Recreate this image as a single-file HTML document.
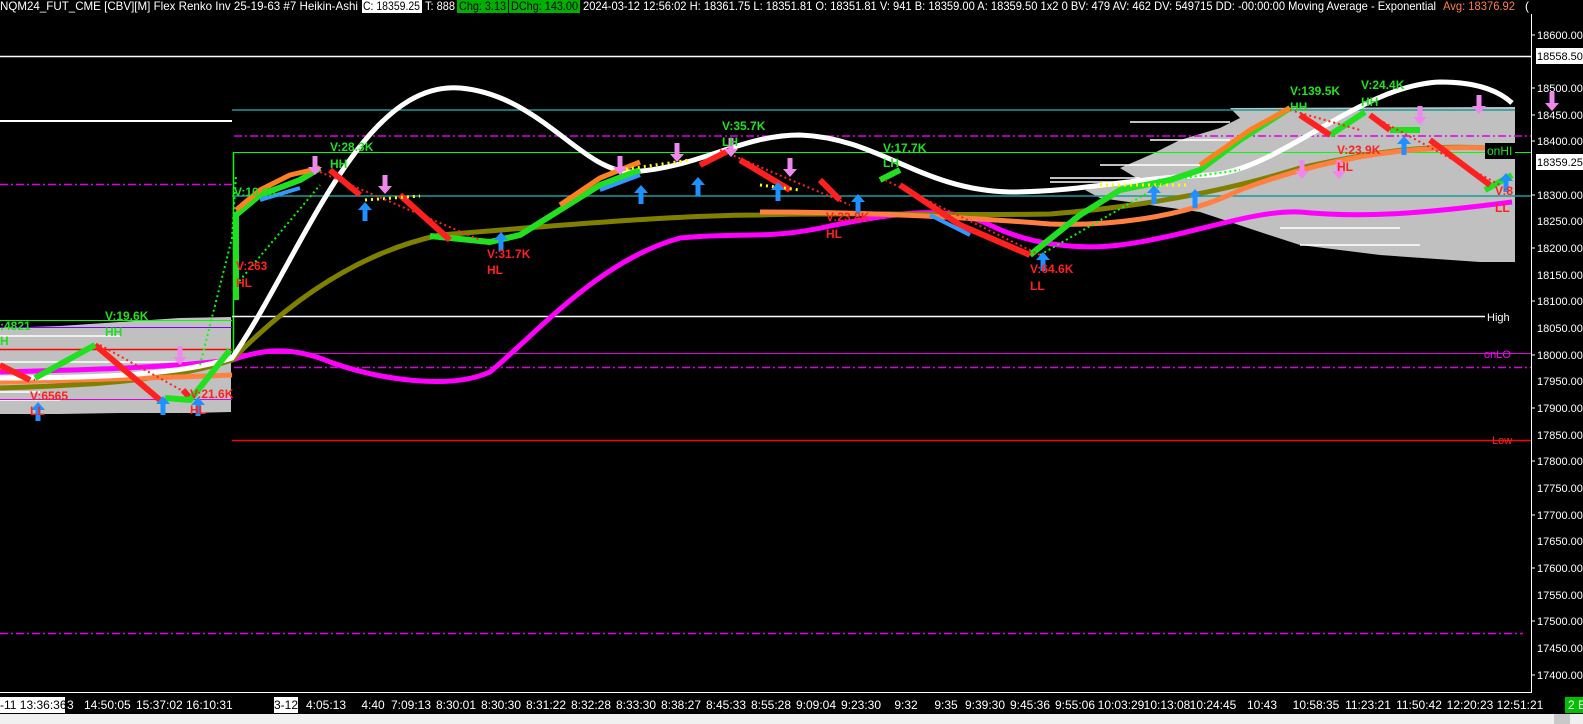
<!DOCTYPE html>
<html><head><meta charset="utf-8"><style>
html,body{margin:0;padding:0;background:#000;width:1583px;height:724px;overflow:hidden}
svg{display:block}
text{font-family:"Liberation Sans",sans-serif}
</style></head><body>
<svg width="1583" height="724" viewBox="0 0 1583 724" xmlns="http://www.w3.org/2000/svg">
<rect width="1583" height="724" fill="#000"/>
<!-- volume profiles -->
<polygon points="0,328 60,326 120,322 180,318 231,317 231,412 190,413 120,413 60,414 0,414" fill="#c0c0c0"/>
<polygon points="1230,108 1515,107 1515,262 1480,262 1380,255 1300,245 1260,232 1230,222 1200,212 1150,205 1100,198 1085,190 1140,180 1120,168 1150,155 1180,140 1220,128 1240,118" fill="#c0c0c0"/>
<g stroke="#fff" stroke-width="1.5">
<line x1="1130" y1="122" x2="1230" y2="122"/><line x1="1150" y1="140" x2="1230" y2="140"/><line x1="1100" y1="165" x2="1200" y2="165"/><line x1="1050" y1="178" x2="1140" y2="178"/><line x1="1050" y1="182" x2="1130" y2="182"/><line x1="1280" y1="228" x2="1400" y2="228"/><line x1="1300" y1="245" x2="1420" y2="245"/>
<line x1="0" y1="336" x2="120" y2="336"/><line x1="0" y1="392" x2="40" y2="392"/><line x1="0" y1="400" x2="60" y2="400"/><line x1="0" y1="362" x2="230" y2="362"/>
</g>
<!-- horizontal levels -->
<line x1="0" y1="56.5" x2="1531" y2="56.5" stroke="#fff" stroke-width="1.5"/>
<line x1="0" y1="121" x2="232" y2="121" stroke="#fff" stroke-width="2"/>
<line x1="232" y1="110" x2="1515" y2="110" stroke="#1a9a9a" stroke-width="1.5"/>
<line x1="232" y1="196" x2="1531" y2="196" stroke="#1a9a9a" stroke-width="1.5"/>
<line x1="234" y1="136" x2="1531" y2="136" stroke="#e000e0" stroke-width="1.5" stroke-dasharray="8,3,2,3"/>
<line x1="0" y1="184.5" x2="232" y2="184.5" stroke="#e000e0" stroke-width="1.5" stroke-dasharray="8,3,2,3"/>
<line x1="234" y1="367.5" x2="1531" y2="367.5" stroke="#e000e0" stroke-width="1.5" stroke-dasharray="8,3,2,3"/>
<line x1="0" y1="633.5" x2="1523" y2="633.5" stroke="#e000e0" stroke-width="1.5" stroke-dasharray="8,3,2,3"/>
<line x1="232" y1="353.5" x2="1531" y2="353.5" stroke="#e000e0" stroke-width="1"/>
<line x1="0" y1="327.5" x2="232" y2="327.5" stroke="#8000ff" stroke-width="1"/>
<line x1="0" y1="399.5" x2="232" y2="399.5" stroke="#e000e0" stroke-width="1"/>
<line x1="0" y1="349.5" x2="232" y2="349.5" stroke="#ff0000" stroke-width="1.5"/>
<line x1="233" y1="152.5" x2="1531" y2="152.5" stroke="#00ff00" stroke-width="1"/>
<line x1="233.5" y1="152" x2="233.5" y2="358" stroke="#00ff00" stroke-width="1.5"/>
<line x1="0" y1="320.5" x2="232" y2="320.5" stroke="#00ff00" stroke-width="1"/>
<line x1="232" y1="316.5" x2="1485" y2="316.5" stroke="#fff" stroke-width="1.5"/>
<line x1="232" y1="440.5" x2="1531" y2="440.5" stroke="#ff0000" stroke-width="1.5"/>
<!-- MAs -->
<path d="M0,372 C80,370 160,368 232,360 C260,350 290,345 330,362 C380,380 450,390 490,372 C540,330 600,260 680,238 C740,232 770,240 830,226 C900,212 950,205 990,225 C1030,245 1080,250 1120,245 C1190,236 1250,210 1300,212 C1360,218 1420,214 1512,202" fill="none" stroke="#ff00ff" stroke-width="5"/>
<path d="M0,388 C60,386 160,384 232,360 C300,290 370,250 440,235 C560,225 680,215 760,215 C850,212 950,216 1050,214 C1150,206 1230,190 1300,168 C1380,150 1430,145 1490,148" fill="none" stroke="#808000" stroke-width="5"/>
<path d="M0,382 C80,380 160,378 232,375 M760,212 C850,212 950,216 1050,224 C1100,226 1180,220 1240,190 C1320,160 1400,145 1490,148" fill="none" stroke="#ff8040" stroke-width="5"/>
<path d="M0,378 C100,378 180,375 232,358 C300,260 360,80 460,88 C540,95 580,170 630,172 C700,168 740,135 800,135 C880,138 920,190 1010,192 C1080,192 1130,178 1210,175 C1280,170 1360,85 1440,82 C1480,82 1500,92 1512,103" fill="none" stroke="#fff" stroke-width="5"/>
<!-- price action -->
<g fill="none" stroke-linejoin="round">
<path d="M0,365 L30,380 M95,345 L160,400 M183,390 L190,398" stroke="#ff2020" stroke-width="6"/>
<path d="M35,378 L95,345 M165,398 L190,400 L230,350 M236,300 L236,215 L260,195 L300,180 L320,168 M430,236 L490,242 L520,235 L560,210 L600,185 L640,170 M880,180 L900,170 M1030,255 L1080,215 L1120,190 L1170,180 L1200,170 L1240,140 L1290,108 M1330,135 L1365,112 M1390,130 L1420,130 M1485,190 L1512,175" stroke="#20e020" stroke-width="6"/>
<path d="M330,170 L360,195 M400,195 L450,240 M700,165 L730,150 M740,160 L790,190 M820,180 L840,200 M900,185 L960,225 L1030,255 M1300,115 L1330,135 M1370,115 L1390,130 M1430,140 L1490,185" stroke="#ff2020" stroke-width="6"/>
<path d="M236,210 L260,190 L290,175 L320,168 M560,205 L600,178 L640,162 M1200,165 L1250,130 L1290,108" stroke="#ff8020" stroke-width="5"/>
<path d="M260,200 L300,188 M600,190 L640,175 M930,215 L970,235" stroke="#3399ff" stroke-width="4"/>
<path d="M365,200 L420,196 M620,170 L690,160 M760,185 L800,190 M1100,185 L1190,185" stroke="#ffff00" stroke-width="3" stroke-dasharray="2,4"/>
</g>
<g fill="none" stroke-width="2" stroke-dasharray="2,3">
<path d="M200,365 L232,238 L236,175 M236,285 L320,185 M1040,255 L1170,180 L1240,170" stroke="#00ff00"/>
<path d="M0,370 L35,380 M100,345 L190,395 M320,172 L480,240 M720,150 L850,205 M885,180 L1040,255 M1290,110 L1360,130 M1370,115 L1500,185" stroke="#ff2020"/>
</g>
<!-- arrows -->
<g fill="#1e90ff">
<path id="ua" d="M-7,8 L0,0 L7,8 L2.5,8 L2.5,19 L-2.5,19 L-2.5,8Z" transform="translate(38,402)"/>
<use href="#ua" x="125" y="-6"/><use href="#ua" x="160" y="-5"/><use href="#ua" x="327" y="-200"/><use href="#ua" x="463" y="-170"/><use href="#ua" x="603" y="-217"/><use href="#ua" x="660" y="-225"/><use href="#ua" x="740" y="-220"/><use href="#ua" x="820" y="-208"/><use href="#ua" x="1005" y="-150"/><use href="#ua" x="1116" y="-217"/><use href="#ua" x="1157" y="-213"/><use href="#ua" x="1366" y="-266"/><use href="#ua" x="1468" y="-229"/>
</g>
<g fill="#ee88ee">
<path id="da" d="M-7,11 L0,19 L7,11 L2.5,11 L2.5,0 L-2.5,0 L-2.5,11Z" transform="translate(180,346)"/>
<use href="#da" x="135" y="-190"/><use href="#da" x="205" y="-171"/><use href="#da" x="440" y="-190"/><use href="#da" x="497" y="-203"/><use href="#da" x="551" y="-208"/><use href="#da" x="610" y="-188"/><use href="#da" x="1122" y="-186"/><use href="#da" x="1159" y="-186"/><use href="#da" x="1299" y="-251"/><use href="#da" x="1372" y="-254"/><use href="#da" x="1240" y="-240"/>
</g>
<!-- labels -->
<g font-size="12" font-weight="bold">
<g fill="#20e020">
<text x="0" y="330">:4821</text><text x="0" y="345">H</text>
<text x="105" y="320">V:19.6K</text><text x="105" y="336">HH</text>
<text x="234" y="196">V:10.9K</text>
<text x="330" y="151">V:28.3K</text><text x="330" y="168">HH</text>
<text x="722" y="130">V:35.7K</text><text x="722" y="146">LH</text>
<text x="883" y="152">V:17.7K</text><text x="883" y="167">LH</text>
<text x="1290" y="95">V:139.5K</text><text x="1290" y="111">HH</text>
<text x="1361" y="89">V:24.4K</text><text x="1361" y="106">HH</text>
</g>
<g fill="#ff2020">
<text x="30" y="400">V:6565</text><text x="30" y="415">LL</text>
<text x="190" y="398">V:21.6K</text><text x="190" y="414">HL</text>
<text x="236" y="270">V:263</text><text x="236" y="287">HL</text>
<text x="487" y="258">V:31.7K</text><text x="487" y="274">HL</text>
<text x="826" y="221">V:23.8K</text><text x="826" y="238">HL</text>
<text x="1030" y="273">V:64.6K</text><text x="1030" y="290">LL</text>
<text x="1337" y="154">V:23.9K</text><text x="1337" y="171">HL</text>
<text x="1495" y="195">V:8</text><text x="1495" y="212">LL</text>
</g>
</g>
<rect x="1485" y="143" width="30" height="16" fill="#000"/>
<text x="1487" y="155" font-size="12" fill="#20e020">onHI</text>
<text x="1484" y="358" font-size="11" fill="#ff00ff">onLO</text>
<text x="1487" y="321" font-size="11" fill="#fff">High</text>
<text x="1492" y="444" font-size="11" fill="#ff2020">Low</text>
<!-- axes -->
<line x1="1531.5" y1="14" x2="1531.5" y2="693" stroke="#fff" stroke-width="1"/>
<line x1="0" y1="692.5" x2="1531" y2="692.5" stroke="#fff" stroke-width="1"/>
<g font-size="11" fill="#fff">
<text x="1537" y="39">18600.00</text><text x="1537" y="92">18500.00</text><text x="1537" y="119">18450.00</text><text x="1537" y="145">18400.00</text><text x="1537" y="199">18300.00</text><text x="1537" y="225">18250.00</text><text x="1537" y="252">18200.00</text><text x="1537" y="279">18150.00</text><text x="1537" y="305">18100.00</text><text x="1537" y="332">18050.00</text><text x="1537" y="359">18000.00</text><text x="1537" y="385">17950.00</text><text x="1537" y="412">17900.00</text><text x="1537" y="439">17850.00</text><text x="1537" y="465">17800.00</text><text x="1537" y="492">17750.00</text><text x="1537" y="519">17700.00</text><text x="1537" y="545">17650.00</text><text x="1537" y="572">17600.00</text><text x="1537" y="599">17550.00</text><text x="1537" y="625">17500.00</text><text x="1537" y="652">17450.00</text><text x="1537" y="679">17400.00</text>
</g>
<g stroke="#fff"><line x1="1531" y1="35" x2="1535" y2="35"/><line x1="1531" y1="88" x2="1535" y2="88"/><line x1="1531" y1="115" x2="1535" y2="115"/><line x1="1531" y1="141" x2="1535" y2="141"/><line x1="1531" y1="195" x2="1535" y2="195"/><line x1="1531" y1="248" x2="1535" y2="248"/><line x1="1531" y1="301" x2="1535" y2="301"/><line x1="1531" y1="355" x2="1535" y2="355"/><line x1="1531" y1="408" x2="1535" y2="408"/><line x1="1531" y1="461" x2="1535" y2="461"/><line x1="1531" y1="515" x2="1535" y2="515"/><line x1="1531" y1="568" x2="1535" y2="568"/><line x1="1531" y1="621" x2="1535" y2="621"/><line x1="1531" y1="675" x2="1535" y2="675"/></g>
<rect x="1536" y="48" width="47" height="16" fill="#fff"/><text x="1537" y="60" font-size="11" fill="#000">18558.50</text>
<rect x="1536" y="154" width="47" height="16" fill="#fff"/><text x="1537" y="166" font-size="11" fill="#000">18359.25</text>
<!-- time axis -->
<rect x="0" y="697" width="65" height="16" fill="#fff"/>
<rect x="274" y="697" width="24" height="16" fill="#fff"/>
<g font-size="12" fill="#fff">
<text x="0" y="709" fill="#000">-11 13:36:36</text><text x="67" y="709">3</text>
<text x="84" y="709">14:50:05</text>
<text x="136" y="709">15:37:02</text><text x="186" y="709">16:10:31</text>
</g>
<g font-size="12" fill="#fff" text-anchor="middle">
<text x="286" y="709" fill="#000">3-12</text>
<text x="326" y="709">4:05:13</text><text x="373" y="709">4:40</text><text x="411" y="709">7:09:13</text><text x="456" y="709">8:30:01</text><text x="501" y="709">8:30:30</text><text x="546" y="709">8:31:22</text><text x="591" y="709">8:32:28</text><text x="636" y="709">8:33:30</text><text x="681" y="709">8:38:27</text><text x="726" y="709">8:45:33</text><text x="771" y="709">8:55:28</text><text x="816" y="709">9:09:04</text><text x="861" y="709">9:23:30</text><text x="906" y="709">9:32</text><text x="946" y="709">9:35</text><text x="985" y="709">9:39:30</text><text x="1030" y="709">9:45:36</text><text x="1075" y="709">9:55:06</text><text x="1121" y="709">10:03:29</text><text x="1167" y="709">10:13:08</text><text x="1213" y="709">10:24:45</text><text x="1262" y="709">10:43</text><text x="1316" y="709">10:58:35</text><text x="1368" y="709">11:23:21</text><text x="1419" y="709">11:50:42</text><text x="1470" y="709">12:20:23</text><text x="1520" y="709">12:51:21</text>
</g>
<rect x="1565" y="697" width="18" height="16" fill="#00c000"/><text x="1568" y="709" font-size="12" fill="#fff">2 B</text>
<rect x="0" y="714" width="1583" height="10" fill="#f0f0f0"/>
<rect x="1554" y="714" width="16" height="10" fill="#c8c8c8"/>
<!-- header -->
<g font-size="12" fill="#fff">
<text x="0" y="10" textLength="358" lengthAdjust="spacingAndGlyphs">NQM24_FUT_CME [CBV][M]  Flex Renko Inv 25-19-63  #7 Heikin-Ashi</text>
<rect x="362" y="0" width="60" height="13" fill="#fff"/><text x="363" y="10" fill="#000" textLength="57" lengthAdjust="spacingAndGlyphs">C: 18359.25</text>
<text x="425" y="10" textLength="30" lengthAdjust="spacingAndGlyphs">T: 888</text>
<rect x="457" y="0" width="123" height="13" fill="#00b000"/>
<text x="459" y="10" fill="#000" textLength="47" lengthAdjust="spacingAndGlyphs">Chg: 3.13</text>
<line x1="508.5" y1="0" x2="508.5" y2="13" stroke="#000"/>
<text x="511" y="10" fill="#000" textLength="67" lengthAdjust="spacingAndGlyphs">DChg: 143.00</text>
<text x="583" y="10" textLength="853" lengthAdjust="spacingAndGlyphs">2024-03-12 12:56:02 H: 18361.75 L: 18351.81 O: 18351.81 V: 941 B: 18359.00 A: 18359.50 1x2 0 BV: 479 AV: 462 DV: 549715 DD: -00:00:00 Moving Average - Exponential</text>
<text x="1443" y="10" fill="#ff8040" textLength="72" lengthAdjust="spacingAndGlyphs">Avg: 18376.92</text><text x="1525" y="10">(</text>
</g>
</svg>
</body></html>
